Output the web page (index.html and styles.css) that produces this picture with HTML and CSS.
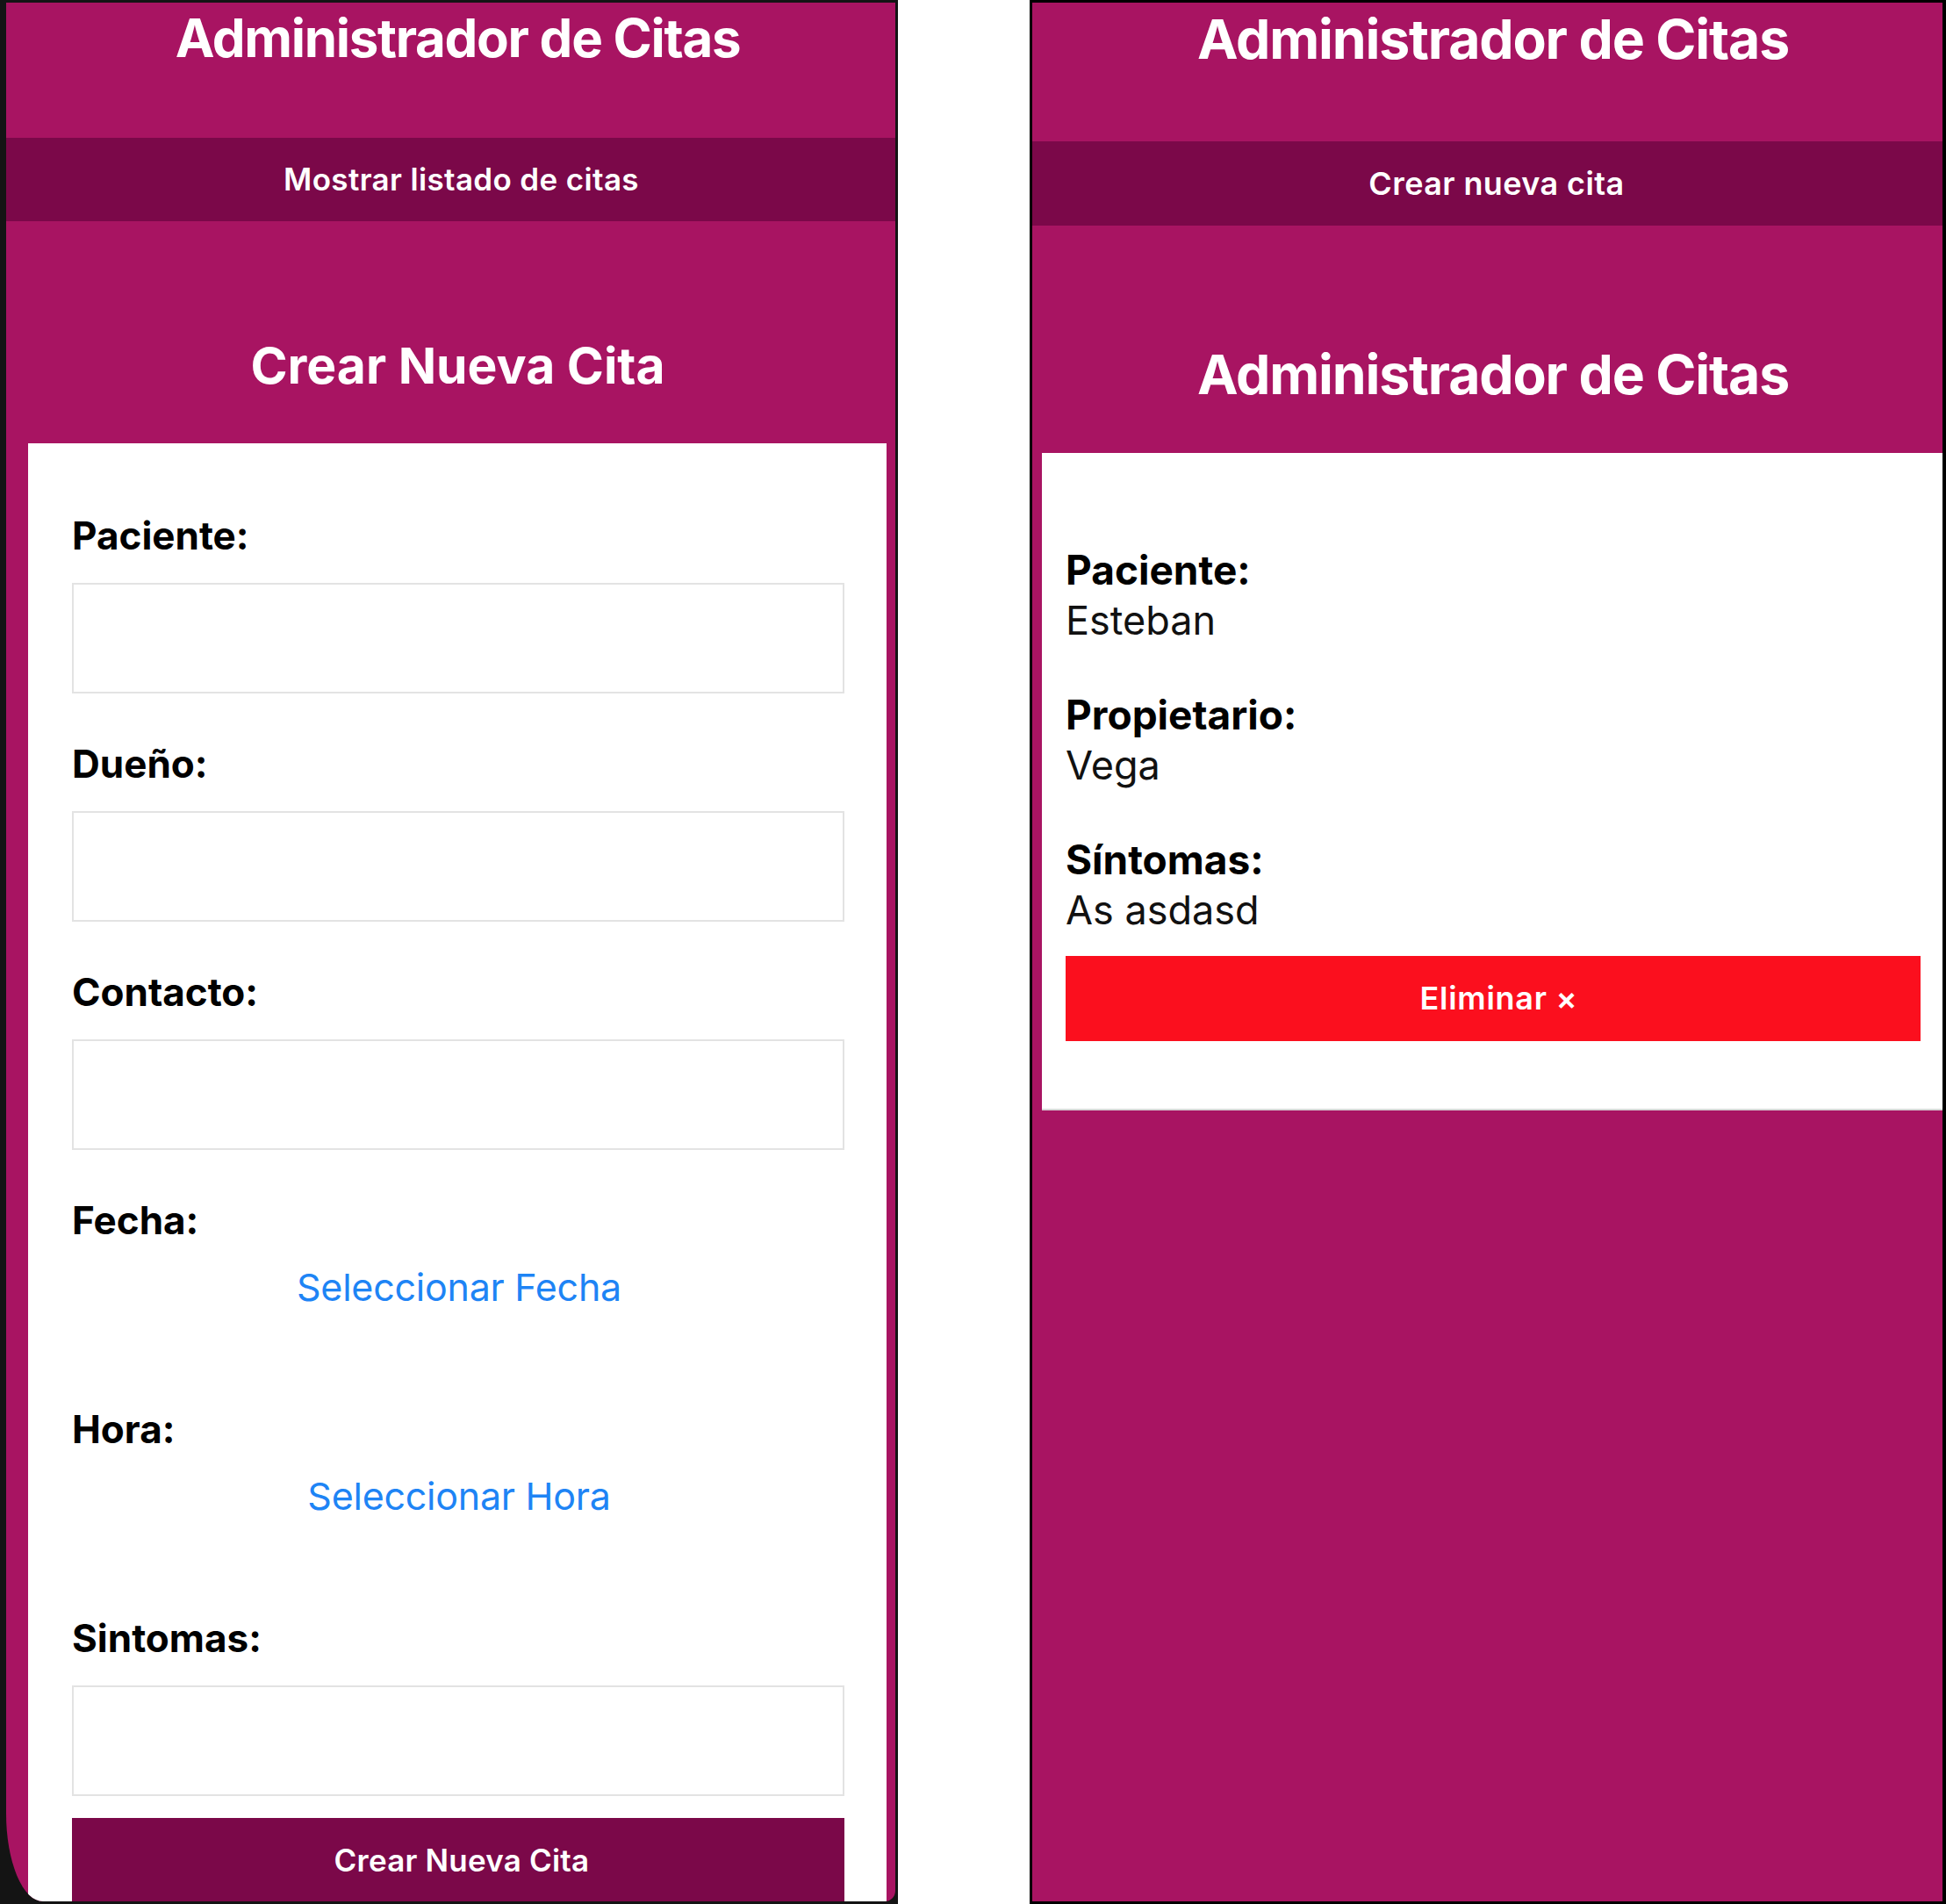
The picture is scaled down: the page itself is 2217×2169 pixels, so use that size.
FILE: index.html
```html
<!DOCTYPE html>
<html lang="es">
<head>
<meta charset="utf-8">
<title>Administrador de Citas</title>
<link rel="stylesheet" href="styles.css">
</head>
<body>
<div class="canvas">
  <section class="phone phone-left">
    <div class="screen screen-left">
      <div class="inner inner-left">
        <h1 class="app-title title-left">Administrador de Citas</h1>
        <div class="nav-bar nav-left">Mostrar listado de citas</div>
        <h2 class="section-title section-left">Crear Nueva Cita</h2>
        <form class="card form-card">
          <div class="field">
            <label class="field-label">Paciente:</label>
            <input class="field-input" type="text">
          </div>
          <div class="field">
            <label class="field-label">Dueño:</label>
            <input class="field-input" type="text">
          </div>
          <div class="field">
            <label class="field-label">Contacto:</label>
            <input class="field-input" type="text">
          </div>
          <div class="field field-picker">
            <label class="field-label">Fecha:</label>
            <div class="picker-btn">Seleccionar Fecha</div>
          </div>
          <div class="field field-picker">
            <label class="field-label">Hora:</label>
            <div class="picker-btn">Seleccionar Hora</div>
          </div>
          <div class="field field-last">
            <label class="field-label">Sintomas:</label>
            <input class="field-input" type="text">
          </div>
          <div class="submit-btn">Crear Nueva Cita</div>
        </form>
      </div>
    </div>
  </section>

  <section class="phone phone-right">
    <div class="screen screen-right">
      <div class="inner inner-right">
        <h1 class="app-title title-right">Administrador de Citas</h1>
        <div class="nav-bar nav-right">Crear nueva cita</div>
        <h2 class="section-title section-right">Administrador de Citas</h2>
        <div class="card cita-card">
          <div class="cita-item">
            <div class="cita-label">Paciente:</div>
            <div class="cita-value">Esteban</div>
          </div>
          <div class="cita-item">
            <div class="cita-label">Propietario:</div>
            <div class="cita-value">Vega</div>
          </div>
          <div class="cita-item">
            <div class="cita-label">Síntomas:</div>
            <div class="cita-value">As asdasd</div>
          </div>
          <div class="delete-btn">Eliminar ×</div>
        </div>
      </div>
    </div>
  </section>
</div>
</body>
</html>
```

FILE: styles.css
```css
* { box-sizing: border-box; }

html, body {
  margin: 0;
  padding: 0;
}

body {
  background: #ffffff;
  font-family: Inter, "Noto Sans", "Liberation Sans", sans-serif;
  width: 2217px;
  height: 2169px;
  overflow: hidden;
}

.canvas {
  display: flex;
  gap: 150px;
  height: 2169px;
}

.phone {
  height: 2169px;
  display: flex;
}

.phone-left {
  width: 1023px;
  background: #141414;
  padding: 3px 3px 3px 7px;
}

.phone-right {
  width: 1044px;
  background: #000000;
  padding: 3px 4px 3px 3px;
}

.screen {
  flex: 1;
  background: #a81462;
  overflow: hidden;
}

.screen-left {
  border-radius: 0 0 12px 0;
  border-bottom-left-radius: 42px 100px;
}

.inner-left { width: 1029px; }
.inner-right { width: 1050px; }

.app-title {
  margin: 0;
  text-align: center;
  color: #ffffff;
  font-weight: 700;
}

.title-left {
  font-size: 60px;
  line-height: 72px;
  padding-top: 4px;
  letter-spacing: -1.3px;
}

.title-right {
  font-size: 62.5px;
  line-height: 74px;
  padding-top: 4px;
  letter-spacing: -1.2px;
}

.nav-bar {
  background: #7b0849;
  color: #ffffff;
  text-align: center;
  font-weight: 600;
}

.nav-left {
  margin-top: 78px;
  height: 95px;
  line-height: 95px;
  font-size: 35px;
  letter-spacing: 0.35px;
  padding-left: 8px;
}

.nav-right {
  margin-top: 80px;
  height: 96px;
  line-height: 96px;
  font-size: 36px;
  letter-spacing: 0.4px;
  padding-left: 8px;
}

.section-title {
  margin: 0;
  text-align: center;
  color: #ffffff;
  font-weight: 700;
}

.section-left {
  margin-top: 130px;
  font-size: 57px;
  line-height: 70px;
  letter-spacing: 0;
}

.section-right {
  margin-top: 132px;
  font-size: 62.5px;
  line-height: 74px;
  letter-spacing: -1.2px;
}

.card {
  background: #ffffff;
}

.form-card {
  margin: 53px 26px 0 25px;
  padding: 78px 48px 0 50px;
}

.field {
  display: flex;
  flex-direction: column;
  margin-bottom: 53px;
}

.field-picker { margin-bottom: 109px; }
.field-last { margin-bottom: 25px; }

.field-label {
  font-size: 44px;
  line-height: 54px;
  font-weight: 700;
  color: #000000;
}

.field-input {
  display: block;
  width: 100%;
  height: 126px;
  margin: 27px 0 0;
  border: 2px solid #e3e3e3;
  background: #ffffff;
  padding: 0 20px;
  font: inherit;
  outline: none;
}

.picker-btn {
  margin-top: 23px;
  text-align: center;
  font-size: 43px;
  line-height: 52px;
  color: #1e84f5;
  letter-spacing: -0.25px;
  padding-left: 2px;
}

.submit-btn {
  height: 96px;
  line-height: 96px;
  background: #7b0849;
  color: #ffffff;
  text-align: center;
  font-size: 35px;
  font-weight: 600;
  letter-spacing: 0.2px;
  padding-left: 8px;
}

.cita-card {
  margin: 53px 11px 0;
  padding: 105px 27px 77px;
  border-bottom: 2px solid #d8d8d8;
}

.cita-item + .cita-item { margin-top: 51px; }

.cita-label {
  font-size: 46px;
  line-height: 57px;
  font-weight: 700;
  color: #000000;
}

.cita-value {
  font-size: 45px;
  line-height: 57px;
  font-weight: 400;
  color: #111111;
}

.delete-btn {
  margin-top: 24px;
  height: 97px;
  line-height: 97px;
  background: #fb0f1e;
  color: #ffffff;
  text-align: center;
  font-size: 36px;
  font-weight: 600;
  letter-spacing: 0.7px;
  padding-left: 13px;
}
```
